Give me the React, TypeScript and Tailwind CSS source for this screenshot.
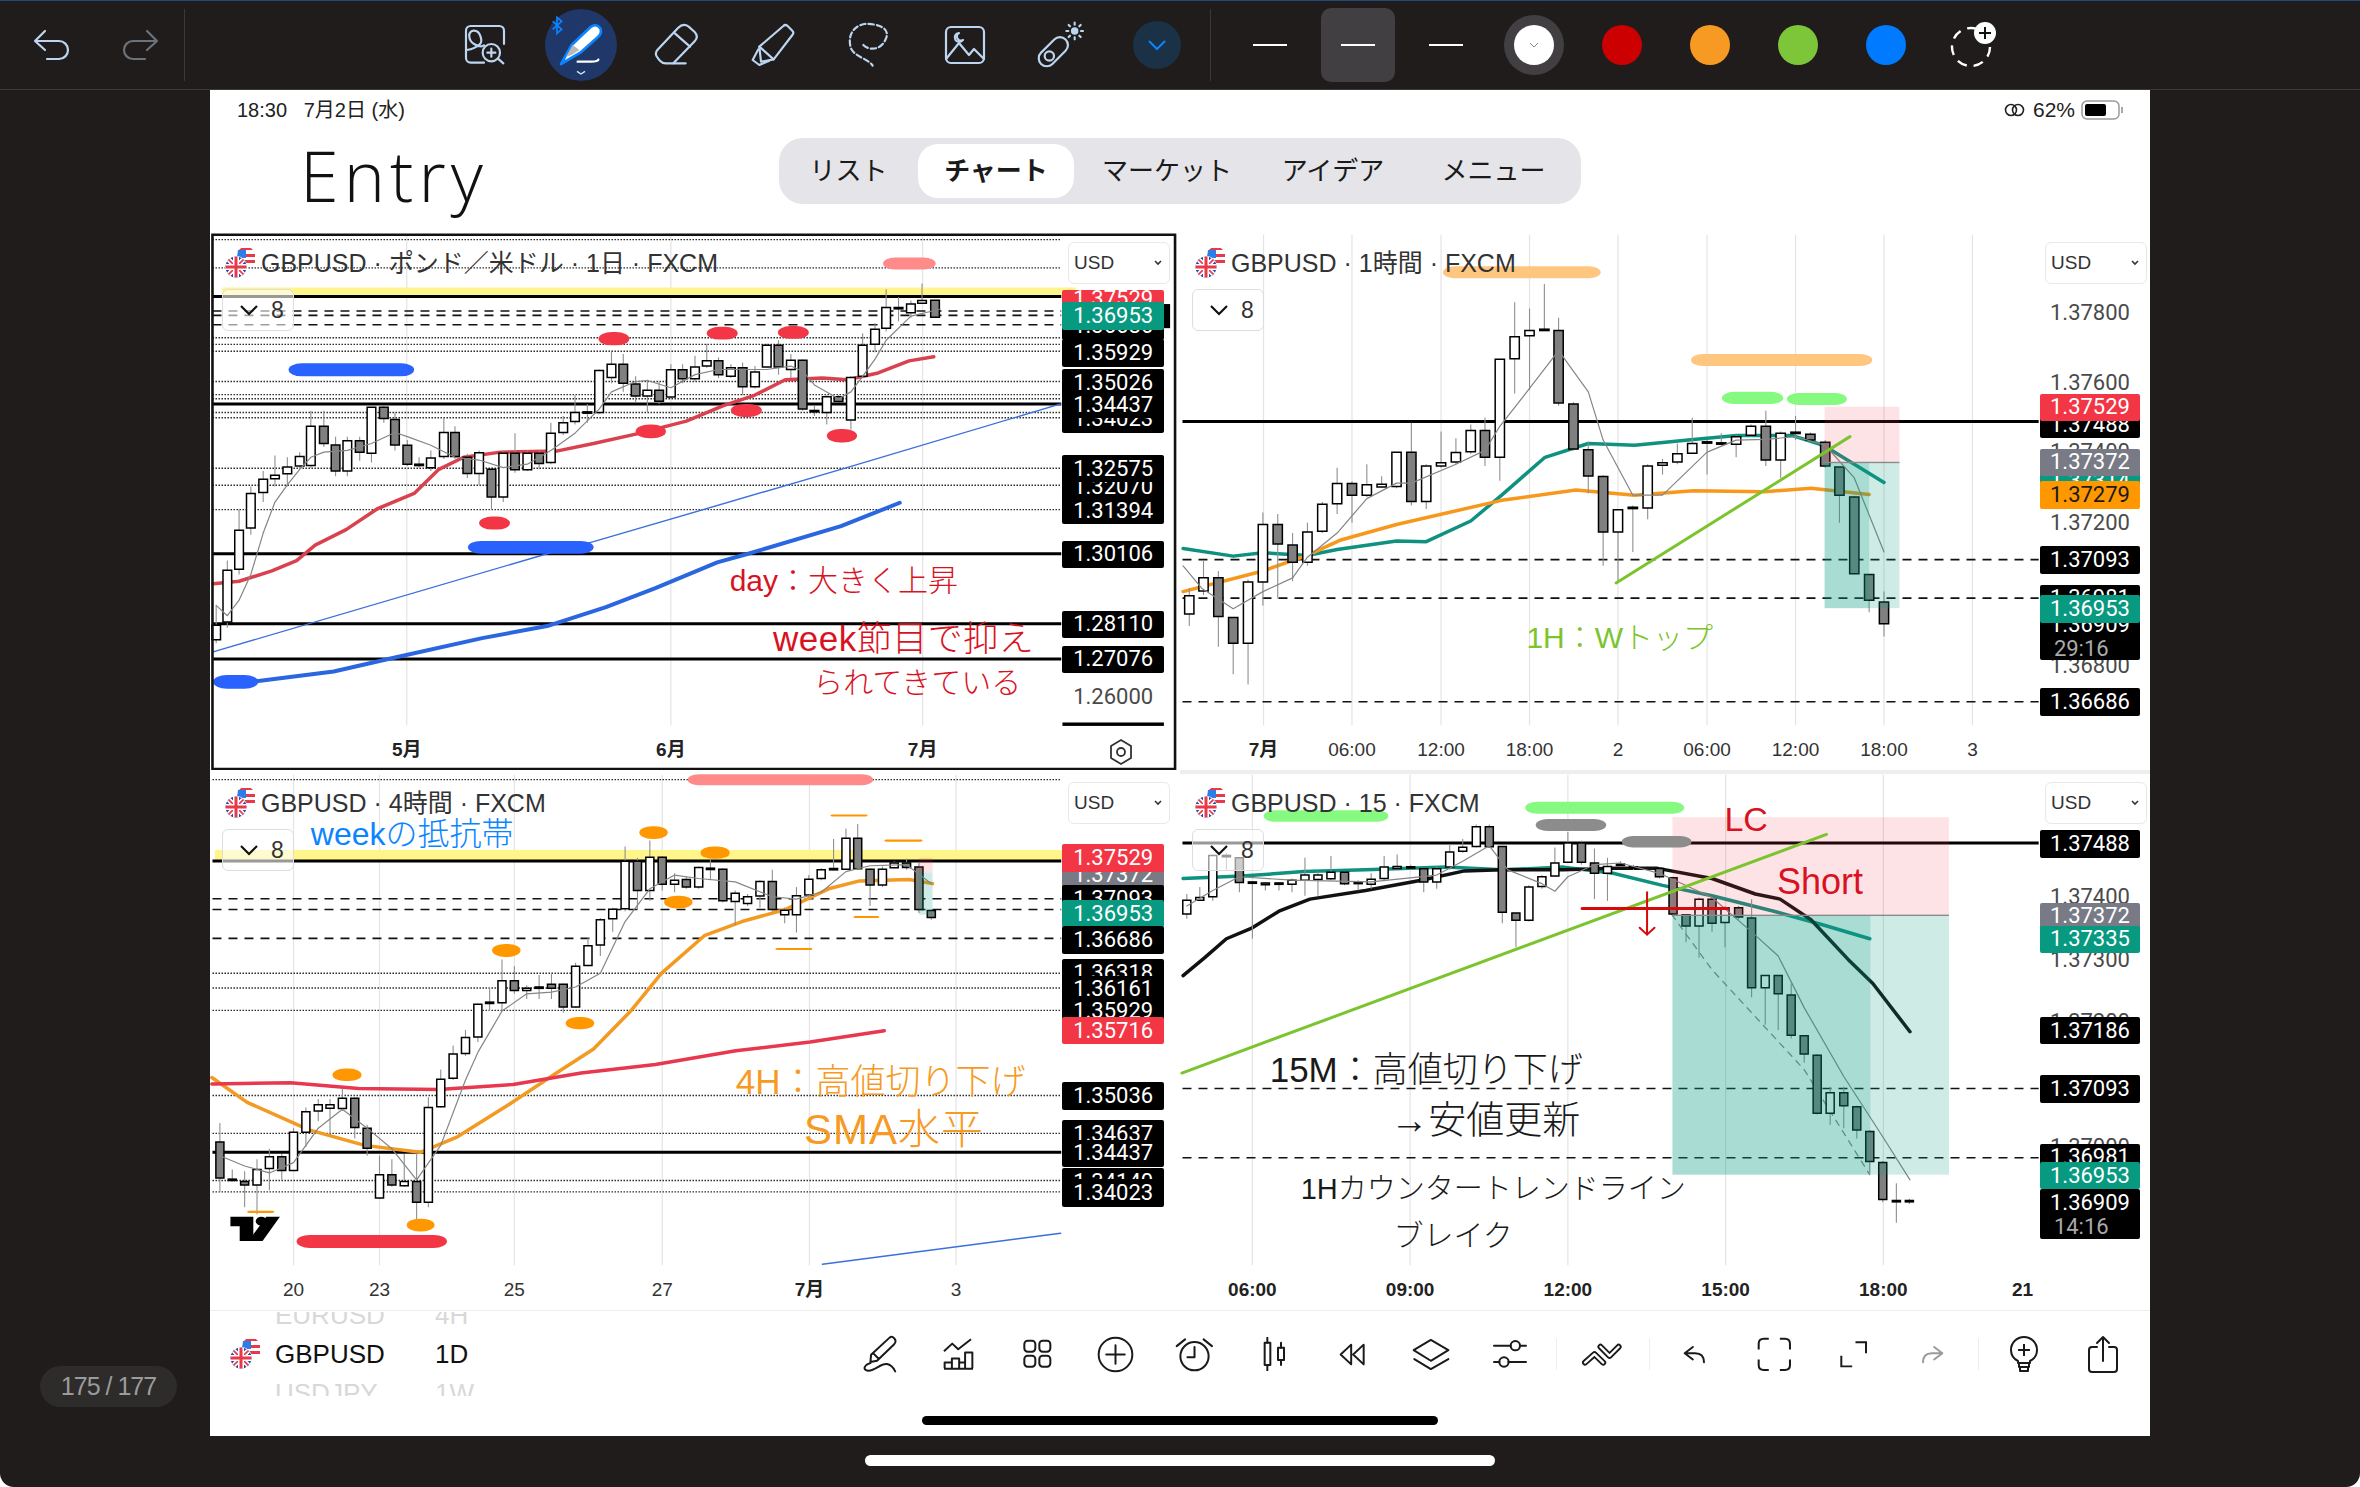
import React from "react";

type C = number[];
type L = { c: number; t: string; bg?: string; fg?: string; t2?: string; h?: number };
type N = { x: number; c: number; t: string; s: number; col: string; ls?: number };
type Line = { p: number[][]; col: string; w: number; dash?: string };
type Chart = {
  title: string; hw: number; candles: C[]; verts: number[]; xl: [number, string, boolean?][];
  solid: number[]; dashed: number[]; dotted: number[]; back: (string | number)[][]; front: (string | number)[][];
  lines: Line[]; over: Line[]; pills: (string | number)[][]; labels: L[]; lx: [number, number]; notes: N[]; lineEnd: number;
};

const X = (z: number) => (z * 970) / 1568;
const Y = (z: number) => (z * 540) / 1568;
const NS = "non-scaling-stroke" as const;
const RED = "#f23645", GRN = "#089981", GRY = "#787b86", ORG = "#ff9800";
const PO = "#ff9800", PR = "#f23645", PB = "#2962ff";
const PLAIN = { bg: "transparent", fg: "#4a4a4a" };

const ch1: Chart = {
  title: "GBPUSD · ポンド／米ドル · 1日 · FXCM", hw: 7, lx: [1378, 1542], lineEnd: 1376,
  candles: [[10,1148,1190,1090,1200,0],[28,988,1138,960,1155,0],[47,872,985,810,1000,0],[66,765,865,745,885,0],[86,724,762,700,790,0],[105,712,722,655,745,0],[125,688,708,660,745,0],[145,658,685,645,690,0],[163,570,684,525,690,0],[184,570,620,525,630,1],[203,624,700,600,715,1],[222,612,700,600,715,0],[242,612,645,600,670,1],[261,515,648,515,675,0],[281,515,547,510,560,1],[299,550,624,530,640,1],[319,625,680,610,685,1],[338,680,682,660,690,1],[357,662,690,640,700,0],[378,588,658,545,665,0],[396,588,658,570,665,1],[416,660,707,650,720,1],[435,647,707,640,740,0],[455,695,775,690,810,1],[474,648,775,640,790,0],[493,648,696,590,705,1],[513,648,696,640,700,0],[532,648,678,640,695,1],[551,590,675,560,680,0],[571,560,588,540,595,0],[590,530,556,480,565,0],[610,528,530,505,560,1],[629,408,530,405,535,0],[649,390,428,350,445,0],[668,390,445,360,470,1],[688,447,482,425,500,1],[707,465,482,435,530,0],[726,465,497,440,505,1],[745,406,485,390,490,0],[764,406,432,390,445,1],[784,398,432,365,440,0],[803,380,395,330,400,0],[822,380,420,370,430,1],[842,400,425,390,430,0],[861,400,455,385,480,1],[881,412,455,395,460,0],[900,335,398,330,400,0],[919,335,398,320,420,1],[939,378,405,360,430,0],[958,378,520,375,525,1],[977,524,528,510,540,1],[997,484,530,480,565,0],[1016,484,498,480,500,1],[1036,428,552,425,580,0],[1055,335,425,300,430,0],[1075,288,332,270,355,0],[1093,225,285,172,295,0],[1113,225,228,195,265,1],[1133,215,240,205,255,0],[1151,205,213,155,215,0],[1172,204,253,204,255,1]],
  verts: [318, 745, 1152], xl: [[318,"5月",true],[745,"6月",true],[1152,"7月",true]],
  solid: [193, 505, 940, 1143, 1246], dashed: [235, 248, 275], dotted: [28,110,313,332,352,440,478,490,530,545,692,741,812],
  back: [[20,167,1400,198,"#fff58a"]],
  front: [[1542,215,1552,285,"#000",1],[1378,1430,1542,1440,"#000",1]],
  lines: [
    { p: [[5,1027],[47,1020],[100,990],[140,960],[170,915],[220,870],[270,810],[330,765],[370,695],[410,660],[470,645],[560,642],[620,620],[690,592],[770,555],[830,510],[880,480],[930,435],[990,430],[1030,435],[1080,415],[1130,380],[1170,368]], col: "#d9414f", w: 3.5 },
    { p: [[5,1225],[545,940],[620,905],[1020,695],[1375,505]], col: "#3a6fdc", w: 1.4 },
    { p: [[75,1310],[200,1282],[290,1245],[440,1185],[545,1150],[640,1095],[720,1040],[820,965],[870,940],[1020,860],[1115,792]], col: "#2a66e0", w: 4 },
    { p: [[10,1090],[28,1120],[47,1075],[66,1000],[86,880],[105,790],[125,740],[145,695],[163,660],[184,645],[222,640],[261,620],[299,588],[319,600],[357,625],[396,660],[435,668],[474,690],[513,680],[551,640],[590,590],[629,520],[649,470],[688,440],[707,437],[745,458],[784,420],[822,405],[861,405],[900,405],[939,395],[958,410],[977,450],[1016,490],[1036,470],[1055,425],[1075,375],[1093,320],[1133,250],[1180,230]], col: "#858585", w: 1.2 },
  ],
  over: [],
  pills: [[127,387,330,425,PB],[417,903,620,940,PB],[5,1292,78,1332,PB],[628,296,678,335,PR],[803,281,853,318,PR],[918,279,968,316,PR],[842,505,892,543,PR],[688,565,737,605,PR],[997,578,1046,617,PR],[435,832,485,870,PR],[1088,80,1173,115,"#ff8a8a"]],
  labels: [{c:200,h:50,t:"1.37529",bg:RED},{c:280,t:"1.36686"},{c:250,t:"1.36953",bg:GRN},{c:357,t:"1.35929"},{c:445,t:"1.35026"},{c:550,t:"1.34023"},{c:507,t:"1.34437"},{c:745,t:"1.32070"},{c:693,t:"1.32575"},{c:815,t:"1.31394"},{c:942,t:"1.30106"},{c:1145,t:"1.28110"},{c:1247,t:"1.27076"},{c:1357,t:"1.26000",...PLAIN}],
  notes: [
    {x:840,c:1020,t:"day：大きく上昇",s:30,col:"#d8121f"},
    {x:910,c:1185,t:"week節目で抑え",s:35,col:"#d8121f",ls:0.5},
    {x:975,c:1315,t:"られてきている",s:30,col:"#d8121f"},
  ],
};

const ch2: Chart = {
  title: "GBPUSD · 1時間 · FXCM", hw: 7.5, lx: [1390, 1552], lineEnd: 1388,
  candles: [[15,1062,1115,1040,1150,0],[38,1010,1048,960,1060,0],[62,1010,1122,990,1210,1],[86,1125,1200,1125,1290,1],[110,1022,1200,1015,1320,0],[134,855,1022,820,1090,0],[158,855,912,825,1070,1],[182,915,965,880,1020,1],[206,877,965,850,975,0],[230,796,875,790,880,0],[254,736,795,690,825,0],[278,736,770,730,850,1],[302,740,770,680,775,0],[326,738,746,715,748,0],[350,645,745,645,750,0],[374,645,788,560,800,1],[398,685,788,680,810,0],[422,676,685,585,690,0],[446,646,674,605,680,0],[470,582,644,565,650,0],[493,582,660,545,685,1],[517,375,660,375,728,0],[541,310,374,210,475,0],[565,292,307,228,465,0],[589,288,291,157,292,1],[612,292,502,255,510,1],[636,505,636,500,640,1],[660,638,714,615,765,1],[684,716,877,712,975,1],[708,812,877,810,1020,0],[732,805,808,800,935,1],[756,685,807,680,840,0],[780,676,683,665,710,0],[804,650,674,620,680,0],[828,620,648,545,650,0],[852,615,618,610,710,1],[875,618,622,590,625,1],[899,600,622,595,660,0],[923,570,596,565,600,0],[947,570,668,525,685,1],[971,590,668,585,720,0],[995,587,590,540,610,1],[1019,593,610,588,615,1],[1043,616,685,610,690,1],[1066,688,770,688,850,1],[1090,775,998,772,1000,1],[1114,1000,1075,1000,1110,1],[1138,1080,1143,1050,1180,1]],
  verts: [135,278,422,565,708,852,995,1138,1281],
  xl: [[135,"7月",true],[278,"06:00"],[422,"12:00"],[565,"18:00"],[708,"2"],[852,"06:00"],[995,"12:00"],[1138,"18:00"],[1281,"3"]],
  solid: [556], dashed: [957, 1069, 1370], dotted: [], back: [],
  front: [[1042,513,1163,675,"#f23645",0.14],[1042,675,1163,1098,"#089981",0.2],[1042,675,1114,1098,"#089981",0.18],[1042,673,1163,677,"#8a8a8a",1]],
  lines: [
    { p: [[5,925],[86,947],[134,937],[206,945],[254,928],[350,903],[398,905],[470,845],[520,770],[590,660],[660,620],[735,625],[830,608],[900,597],[990,597],[1040,625],[1090,680],[1138,733]], col: "#0f9180", w: 3.5 },
    { p: [[5,1050],[134,990],[206,945],[260,900],[350,855],[520,785],[640,755],[735,770],[830,757],[945,760],[1020,750],[1114,768]], col: "#f7981d", w: 3.5 },
    { p: [[5,975],[35,1040],[86,1100],[134,1050],[182,1010],[206,950],[254,880],[302,780],[350,735],[374,735],[446,680],[493,640],[517,570],[565,460],[612,350],[660,470],[684,610],[732,770],[780,770],[852,645],[899,610],[947,608],[995,600],[1043,625],[1090,720],[1138,935]], col: "#858585", w: 1.2 },
  ],
  over: [{ p: [[705,1025],[1083,600]], col: "#7cc42e", w: 3 }],
  pills: [[425,105,680,140,"#ffc680"],[826,360,1119,395,"#ffc680"],[876,470,975,505,"#85f980"],[981,473,1078,508,"#85f980"]],
  labels: [{c:242,t:"1.37800",...PLAIN},{c:445,t:"1.37600",...PLAIN},{c:850,t:"1.37200",...PLAIN},{c:1265,t:"1.36800",...PLAIN},{c:645,t:"1.37400",...PLAIN},{c:565,t:"1.37488"},{c:515,t:"1.37529",bg:RED},{c:730,t:"1.37314",bg:GRN},{c:675,t:"1.37372",bg:GRY},{c:770,t:"1.37279",bg:ORG,fg:"#1a1a1a"},{c:958,t:"1.37093"},{c:1148,t:"1.36909",t2:"29:16",h:142},{c:1070,t:"1.36981"},{c:1100,t:"1.36953",bg:GRN},{c:1370,t:"1.36686"}],
  notes: [{x:560,c:1185,t:"1H：Wトップ",s:30,col:"#7cc42e"}],
};

const ch3: Chart = {
  title: "GBPUSD · 4時間 · FXCM", hw: 6.5, lx: [1378, 1542], lineEnd: 1376,
  candles: [[16,1080,1185,1025,1225,1],[36,1188,1192,1160,1195,1],[56,1195,1205,1165,1270,1],[76,1160,1205,1130,1290,0],[96,1123,1157,1100,1220,0],[116,1123,1163,1115,1190,1],[135,1052,1163,1040,1165,0],[155,992,1052,980,1095,0],[175,972,990,955,1020,0],[194,972,982,955,1060,0],[214,953,983,925,990,0],[234,953,1038,950,1070,1],[254,1040,1098,1030,1120,1],[274,1175,1243,1120,1245,0],[294,1175,1205,1130,1210,1],[314,1195,1207,1115,1210,0],[334,1195,1255,1110,1305,1],[353,980,1255,950,1270,0],[373,898,978,870,980,0],[393,825,895,800,900,0],[413,777,823,755,830,0],[433,680,775,678,790,0],[452,674,678,630,700,1],[472,612,676,550,700,0],[492,612,640,570,650,1],[512,634,640,625,665,0],[532,630,634,595,665,0],[552,622,634,590,665,1],[571,622,688,620,705,1],[591,570,688,560,690,0],[611,510,568,485,570,0],[631,435,508,430,540,0],[651,404,432,400,470,0],[671,265,403,222,410,0],[691,265,350,255,405,1],[711,253,350,205,380,0],[731,253,332,250,350,1],[751,320,332,300,355,0],[770,318,340,310,345,1],[790,283,340,280,345,0],[809,285,289,258,320,1],[829,288,380,285,385,1],[849,358,382,350,450,0],[869,368,388,360,395,0],[889,324,366,320,400,0],[909,324,405,290,410,1],[929,407,420,400,445,0],[948,365,420,340,472,0],[968,317,363,305,370,0],[988,290,315,285,320,0],[1008,286,290,200,290,1],[1028,198,288,170,290,0],[1047,198,287,157,290,1],[1067,288,334,285,395,1],[1087,288,334,280,340,0],[1106,270,284,265,285,0],[1126,270,283,258,290,1],[1146,282,405,270,415,1],[1166,408,428,405,435,1]],
  verts: [135,274,492,731,969,1206],
  xl: [[135,"20"],[274,"23"],[492,"25"],[731,"27"],[969,"7月",true],[1206,"3"]],
  solid: [264, 1110], dashed: [374, 405, 489], dotted: [28,590,633,698,945,1055,1192,1225],
  back: [[8,232,1378,262,"#fff58a"]],
  front: [[1146,255,1168,298,"#f23645",0.14],[1146,298,1168,420,"#089981",0.2]],
  lines: [
    { p: [[3,893],[60,965],[160,1045],[250,1090],[340,1110],[400,1065],[480,975],[560,880],[620,810],[680,700],[730,590],[800,480],[860,440],[930,405],[1000,345],[1050,322],[1130,318],[1168,330]], col: "#f29a21", w: 3.5 },
    { p: [[3,912],[130,908],[240,925],[370,928],[490,913],[600,880],[720,855],[850,815],[970,790],[1090,757]], col: "#e8384f", w: 3.5 },
    { p: [[990,1435],[1375,1345]], col: "#3a6fdc", w: 1.4 },
    { p: [[16,1120],[56,1150],[96,1170],[135,1140],[175,1040],[214,985],[254,1040],[294,1100],[334,1190],[373,1090],[413,900],[433,820],[472,700],[512,650],[552,645],[591,630],[631,590],[671,440],[711,345],[751,305],[790,315],[849,325],[909,368],[948,375],[988,355],[1028,295],[1067,278],[1126,275],[1166,330]], col: "#858585", w: 1.2 },
  ],
  over: [],
  pills: [[772,12,1072,44,"#ff8a8a"],[694,163,740,200,PO],[793,222,840,258,PO],[734,365,780,402,PO],[456,505,502,543,PO],[575,717,621,753,PO],[198,867,245,903,PO],[318,1303,363,1340,PO],[140,1350,383,1388,PR],[1003,129,1063,135,PO],[1090,202,1152,208,PO],[1040,424,1082,430,PO],[914,517,974,523,PO],[60,1280,104,1286,PO]],
  labels: [{c:305,t:"1.37372",bg:GRY},{c:255,t:"1.37529",bg:RED},{c:375,t:"1.37093"},{c:417,t:"1.36953",bg:GRN},{c:493,t:"1.36686"},{c:590,t:"1.36318"},{c:637,t:"1.36161"},{c:700,t:"1.35929"},{c:757,t:"1.35716",bg:RED},{c:947,t:"1.35036"},{c:1057,t:"1.34637"},{c:1195,t:"1.34140"},{c:1113,t:"1.34437"},{c:1228,t:"1.34023"}],
  notes: [
    {x:163,c:187,t:"weekの抵抗帯",s:32,col:"#0a84ff"},
    {x:850,c:905,t:"4H：高値切り下げ",s:35,col:"#f79a23"},
    {x:960,c:1045,t:"SMA水平",s:42,col:"#f79a23",ls:1},
  ],
};

const ch4: Chart = {
  title: "GBPUSD · 15 · FXCM", hw: 6.5, lx: [1390, 1552], lineEnd: 1388,
  candles: [[11,378,418,360,432,0],[32,370,378,340,380,0],[53,248,368,245,380,0],[75,248,252,240,290,1],[96,255,327,255,355,1],[117,325,329,325,490,1],[138,328,333,325,350,1],[160,328,332,325,350,1],[181,320,332,315,355,0],[202,305,320,255,365,0],[223,305,318,295,365,0],[244,297,316,250,320,0],[266,297,330,295,335,1],[288,326,330,320,350,1],[309,317,332,300,345,0],[330,282,315,250,320,0],[351,280,286,245,290,0],[373,281,285,275,290,1],[394,287,325,285,355,1],[415,287,325,280,345,0],[436,238,282,215,290,0],[457,224,236,200,240,0],[479,165,222,158,225,0],[500,165,223,158,225,1],[521,222,413,220,445,1],[543,415,436,415,515,1],[564,340,436,335,440,0],[585,310,338,305,345,0],[606,270,308,225,310,0],[627,212,268,180,270,0],[649,212,268,205,275,1],[670,270,300,228,375,1],[691,280,300,255,380,0],[712,273,277,265,280,1],[733,281,285,275,290,1],[775,286,310,283,315,1],[797,313,418,310,425,1],[818,420,453,418,500,1],[839,375,453,370,545,0],[860,375,445,370,470,1],[881,400,443,395,515,0],[903,400,427,395,435,1],[924,430,632,375,660,1],[946,597,632,595,740,0],[967,597,650,595,755,1],[988,653,770,620,780,1],[1009,772,825,770,850,1],[1030,828,997,825,1000,1],[1051,937,997,920,1030,0],[1073,937,975,920,1040,1],[1094,978,1045,975,1070,1],[1115,1050,1137,1045,1170,1],[1136,1140,1247,1135,1255,1],[1158,1250,1254,1200,1315,1],[1179,1250,1254,1245,1260,1]],
  verts: [117,372,627,882,1137],
  xl: [[117,"06:00",true],[372,"09:00",true],[627,"12:00",true],[882,"15:00",true],[1137,"18:00",true],[1362,"21",true]],
  solid: [212], dashed: [925, 1126], dotted: [], back: [],
  front: [[796,137,1243,422,"#f23645",0.14],[796,422,1243,1175,"#089981",0.2],[796,422,1116,1175,"#089981",0.18],[796,420,1243,424,"#8a8a8a",1]],
  lines: [
    { p: [[5,315],[100,308],[200,295],[300,290],[430,282],[520,290],[620,282],[700,300],[780,335],[860,365],[960,410],[1040,450],[1115,490]], col: "#0f9180", w: 3.5 },
    { p: [[5,597],[40,545],[75,490],[115,460],[160,410],[210,375],[300,350],[390,320],[460,293],[520,290],[620,290],[700,285],[770,285],[860,315],[930,360],[970,375],[1020,435],[1080,550],[1120,620],[1180,760]], col: "#111111", w: 3.5 },
    { p: [[795,420],[860,580],[1009,870],[1115,1175]], col: "#8a8a8a", w: 1.3, dash: "6 6" },
    { p: [[11,395],[53,350],[96,310],[181,320],[309,325],[415,305],[457,265],[500,220],[530,290],[585,330],[606,352],[627,310],[670,275],[712,270],[775,300],[860,370],[924,470],[967,540],[1009,690],[1073,890],[1136,1065],[1180,1190]], col: "#858585", w: 1.2 },
  ],
  over: [
    { p: [[3,880],[1045,187]], col: "#7cc42e", w: 3 },
    { p: [[650,402],[885,402]], col: "#d60a0a", w: 3 },
    { p: [[755,355],[755,478]], col: "#d60a0a", w: 2 },
    { p: [[743,458],[755,478],[767,458]], col: "#d60a0a", w: 2 },
  ],
  pills: [[135,117,337,150,"#85f980"],[558,92,815,127,"#85f980"],[575,142,689,177,"#8c8c8c"],[714,192,827,225,"#8c8c8c"]],
  labels: [{c:370,t:"1.37400",...PLAIN},{c:553,t:"1.37300",...PLAIN},{c:1095,t:"1.37000",...PLAIN},{c:732,t:"1.37200",...PLAIN},{c:215,t:"1.37488"},{c:425,t:"1.37372",bg:GRY},{c:492,t:"1.37335",bg:GRN},{c:757,t:"1.37186"},{c:927,t:"1.37093"},{c:1125,t:"1.36981"},{c:1258,t:"1.36909",t2:"14:16",h:145},{c:1178,t:"1.36953",bg:GRN}],
  notes: [
    {x:880,c:143,t:"LC",s:34,col:"#d8121f"},
    {x:965,c:325,t:"Short",s:36,col:"#d8121f"},
    {x:145,c:870,t:"15M：高値切り下げ",s:35,col:"#1a1a1a"},
    {x:340,c:1015,t:"→安値更新",s:38,col:"#1a1a1a"},
    {x:195,c:1218,t:"1Hカウンタートレンドライン",s:29,col:"#1a1a1a"},
    {x:345,c:1352,t:"ブレイク",s:30,col:"#1a1a1a"},
  ],
};

function Flag({ size = 30 }: { size?: number }) {
  return (
    <svg width={size} height={size} viewBox="0 0 30 30" className="shrink-0">
      <circle cx="21" cy="9" r="9" fill="#fff" />
      <path d="M14 2a9 9 0 0 1 14 0zM13 6h17v3H12zM12 12h18v3H14z" fill="#e8394b" />
      <path d="M13 2h8v8h-9z" fill="#2b7de9" />
      <circle cx="11" cy="19" r="11" fill="#fff" />
      <clipPath id="ukc"><circle cx="11" cy="19" r="10.5" /></clipPath>
      <g clipPath="url(#ukc)">
        <rect x="0" y="8" width="22" height="22" fill="#29479b" />
        <path d="M0 8l22 22M22 8L0 30" stroke="#fff" strokeWidth="5" />
        <path d="M0 8l22 22M22 8L0 30" stroke="#e8394b" strokeWidth="1.6" />
        <path d="M11 8v22M0 19h22" stroke="#fff" strokeWidth="6" />
        <path d="M11 8v22M0 19h22" stroke="#e8394b" strokeWidth="3" />
      </g>
    </svg>
  );
}

function ChartPanel({ d, active, sep, logo, gear }: { d: Chart; active?: boolean; sep?: boolean; logo?: boolean; gear?: boolean }) {
  const poly = (l: Line, i: number) => (
    <polyline key={i} points={l.p.map((q) => q.join(",")).join(" ")} fill="none" stroke={l.col} strokeWidth={l.w} strokeDasharray={l.dash} strokeLinejoin="round" strokeLinecap="round" vectorEffect={NS} />
  );
  return (
    <div className="relative h-[540px] w-[970px] overflow-hidden bg-white">
      <svg className="absolute inset-0 h-full w-full" viewBox="0 0 1568 1568" preserveAspectRatio="none">
        {d.verts.map((v) => <line key={v} x1={v} x2={v} y1={14} y2={1438} stroke="#e4e4e4" strokeWidth={1.2} vectorEffect={NS} />)}
        {d.back.map((r, i) => <rect key={i} x={+r[0]} y={+r[1]} width={+r[2] - +r[0]} height={+r[3] - +r[1]} fill={String(r[4])} />)}
        {d.dotted.map((y) => <line key={y} x1={4} x2={d.lineEnd} y1={y} y2={y} stroke="#2b2b2b" strokeWidth={1.4} strokeDasharray="1.5 1.5" vectorEffect={NS} />)}
        {d.dashed.map((y) => <line key={y} x1={4} x2={d.lineEnd} y1={y} y2={y} stroke="#111" strokeWidth={1.6} strokeDasharray="9 7" vectorEffect={NS} />)}
        {d.solid.map((y) => <line key={y} x1={4} x2={d.lineEnd} y1={y} y2={y} stroke="#000" strokeWidth={3} vectorEffect={NS} />)}
        {d.lines.slice(0, -1).map(poly)}
        {d.candles.map((c, i) => (
          <g key={i}>
            <line x1={c[0]} x2={c[0]} y1={c[3]} y2={c[4]} stroke="#8f8f8f" strokeWidth={1.1} vectorEffect={NS} />
            <rect x={c[0] - d.hw} y={c[1]} width={d.hw * 2} height={Math.max(c[2] - c[1], 4)} fill={c[5] ? "#808080" : "#fff"} stroke="#000" strokeWidth={1.5} vectorEffect={NS} />
          </g>
        ))}
        {d.lines.slice(-1).map(poly)}
        {d.front.map((r, i) => <rect key={i} x={+r[0]} y={+r[1]} width={+r[2] - +r[0]} height={+r[3] - +r[1]} fill={String(r[4])} fillOpacity={r[5] as number} />)}
        {d.over.map(poly)}
        {d.pills.map((p, i) => {
          const h = +p[3] - +p[1];
          return <rect key={i} x={+p[0]} y={+p[1]} width={+p[2] - +p[0]} height={h} ry={h / 2} rx={(h * 540) / 970} fill={String(p[4])} />;
        })}
        {logo && (
          <g fill="#000">
            <path d="M33 1297H70V1368H48V1325H33Z" />
            <ellipse cx="83" cy="1310" rx="9" ry="13" />
            <path d="M91 1297H113L85 1368H62Z" />
          </g>
        )}
        {active && <rect x={4} y={14} width={1556} height={1551} fill="none" stroke="#111" strokeWidth={2.6} vectorEffect={NS} />}
        {sep && <rect x={0} y={0} width={1568} height={12} fill="#eeeeee" />}
      </svg>

      {d.labels.map((l, i) => {
        const h = Y(l.h ?? 80);
        const two = !!l.t2;
        return (
          <div
            key={i}
            className="absolute overflow-hidden rounded-[2px] text-[22px] font-['Roboto',sans-serif]"
            style={{ left: X(d.lx[0]), width: X(d.lx[1] - d.lx[0]), top: two ? Y(l.c) - 14 : Y(l.c) - h / 2, height: h, background: l.bg ?? "#000", color: l.fg ?? "#fff" }}
          >
            <div className={`flex items-center justify-center leading-none ${two ? "h-[28px]" : "h-full"}`}>{l.t}</div>
            {two && <div className="pl-[14px] leading-[20px] text-[#aaaaaa]">{l.t2}</div>}
          </div>
        );
      })}

      {d.notes.map((n, i) => (
        <div key={i} className="absolute whitespace-nowrap font-light leading-none" style={{ left: X(n.x), top: Y(n.c) - n.s / 2, fontSize: n.s, color: n.col, letterSpacing: n.ls }}>{n.t}</div>
      ))}

      {d.xl.map(([x, t, b], i) => (
        <div key={i} className={`absolute top-[508px] w-[80px] text-center text-[19px] leading-[24px] ${b ? "font-semibold text-[#222]" : "text-[#333]"}`} style={{ left: X(x) - 40 }}>{t}</div>
      ))}

      <div className="absolute left-[15px] top-[18px] flex items-center gap-[6px] text-[25px] leading-[30px] text-[#333]">
        <Flag />
        <span className="whitespace-nowrap">{d.title}</span>
      </div>
      <div className={`absolute top-[12px] flex h-[42px] w-[102px] items-center justify-between rounded-[6px] border border-[#e8e8e8] bg-white/90 pl-[5px] pr-[6px] text-[19px] text-[#333] ${d.lx[0] === 1378 ? "left-[858px]" : "left-[865px]"}`}>
        USD
        <svg width="10" height="8" viewBox="0 0 10 8"><path d="M2 2l3 3 3-3" fill="none" stroke="#333" strokeWidth="1.6" /></svg>
      </div>
      <div className="absolute left-[12px] top-[59px] flex h-[42px] w-[72px] items-center gap-[12px] rounded-[6px] border border-[#dddddd] bg-white/60 pl-[16px] text-[23px] text-[#333]">
        <svg width="20" height="14" viewBox="0 0 20 14"><path d="M2 3l8 8 8-8" fill="none" stroke="#111" strokeWidth="2.2" /></svg>
        8
      </div>
      {gear && (
        <svg className="absolute left-[897px] top-[507px]" width="28" height="30" viewBox="0 0 28 30" fill="none" stroke="#333" strokeWidth="1.8">
          <path d="M14 3l10 6v12l-10 6-10-6V9z" />
          <circle cx="14" cy="15" r="4" />
        </svg>
      )}
    </div>
  );
}

const tb = { fill: "none", stroke: "currentColor", strokeWidth: 6.5, strokeLinecap: "round" as const, strokeLinejoin: "round" as const };

function TopBar() {
  return (
    <div className="flex h-[90px] items-center border-b border-t border-b-[#3b3938] border-t-[#1f4a80] bg-[#1f1c1b] pl-[8px] text-[#bcd6f1]">
      <div className="flex h-[72px] w-[88px] items-center justify-center">
        <svg width="42" height="34" viewBox="0 0 42 34" fill="none" stroke="currentColor" strokeWidth="2.2" strokeLinecap="round" strokeLinejoin="round"><path d="M14 3L4 13l10 9M4 13h24a9 9 0 0 1 0 18H16" /></svg>
      </div>
      <div className="flex h-[72px] w-[88px] items-center justify-center text-[#6b7278]">
        <svg width="42" height="34" viewBox="0 0 42 34" fill="none" stroke="currentColor" strokeWidth="2.2" strokeLinecap="round" strokeLinejoin="round"><path d="M28 3l10 10-10 9M38 13H14a9 9 0 0 0 0 18h12" /></svg>
      </div>
      <div className="h-[72px] w-px bg-[#3b3938]" />
      <div className="flex w-[252px]" />
      <div className="flex h-[72px] w-[96px] items-center justify-center">
        <svg width="42" height="42" viewBox="40 72 126 126" {...tb}>
          <path d="M100 188H60a14 14 0 0 1-14-14V92a14 14 0 0 1 14-14h86a14 14 0 0 1 14 14v40" />
          <path d="M48 150c14-2 30-8 40-18M88 132c8-8 2-40-18-40s-18 30 0 40 26 8 30 4" />
          <circle cx="122" cy="158" r="26" /><path d="M142 176l16 14M122 146v24M110 158h24" />
        </svg>
      </div>
      <div className="flex h-[72px] w-[96px] items-center justify-center">
        <svg width="72" height="72" viewBox="282 27 216 216">
          <circle cx="390" cy="135" r="108" fill="#1f3769" />
          <path d="M305 64l27 24-14 12V52l14 12-27 24" fill="none" stroke="#0a84ff" strokeWidth="5" />
          <path d="M330 192L362 135L418 82Q435 68 448 85Q455 98 440 112L388 158Z" fill="#fff" stroke="#0a84ff" strokeWidth="8" strokeLinejoin="round" />
          <path d="M345 170L365 135L385 150L362 165Z" fill="#b9b9b9" />
          <path d="M380 185h40q20 0 22-6" fill="none" stroke="#fff" strokeWidth="7" strokeLinecap="round" />
          <path d="M378 214l12 8 12-8" fill="none" stroke="#dfe6f2" strokeWidth="4" />
        </svg>
      </div>
      <div className="flex h-[72px] w-[96px] items-center justify-center">
        <svg width="46" height="46" viewBox="610 66 138 138" {...tb}>
          <path d="M620 150L682 84Q698 68 714 80L732 96Q745 110 732 124L668 190H645Q635 190 628 182L622 175Q610 162 620 150Z" />
          <path d="M670 98L718 140M668 190H705" />
        </svg>
      </div>
      <div className="flex h-[72px] w-[96px] items-center justify-center">
        <svg width="46" height="46" viewBox="897 66 138 138" {...tb}>
          <path d="M925 140L997 78Q1003 72 1010 78L1024 92Q1030 98 1024 105L968 178L930 185Z" />
          <path d="M925 140L968 178M922 148L905 180L925 195L955 182" />
        </svg>
      </div>
      <div className="flex h-[72px] w-[96px] items-center justify-center">
        <svg width="46" height="46" viewBox="1185 66 138 138" {...tb} strokeDasharray="16 9">
          <path d="M1237 135C1250 150 1290 155 1305 115C1320 80 1270 70 1240 72C1200 80 1190 115 1200 145C1210 170 1250 175 1265 197" />
        </svg>
      </div>
      <div className="flex h-[72px] w-[96px] items-center justify-center">
        <svg width="42" height="40" viewBox="0 0 42 40" fill="none" stroke="currentColor" strokeWidth="2.2" strokeLinecap="round" strokeLinejoin="round">
          <rect x="2" y="2" width="38" height="36" rx="5" />
          <path d="M2 34l13-16 10 12 5-6 10 10" />
          <path d="M15 8a4.5 4.5 0 1 0 4 7 4 4 0 0 1-4-7z" />
        </svg>
      </div>
      <div className="flex h-[72px] w-[96px] items-center justify-center">
        <svg width="54" height="50" viewBox="100 60 162 150" {...tb}>
          <rect x="-52" y="-24" width="104" height="48" rx="24" transform="translate(158 155) rotate(-45)" />
          <circle cx="146" cy="168" r="14" />
          <circle cx="222" cy="93" r="8" fill="currentColor" />
          <path d="M222 68v6M222 112v6M197 93h6M241 93h6M204 75l4 4M240 75l-4 4M204 111l4-4M240 111l-4-4" />
        </svg>
      </div>
      <div className="flex h-[72px] w-[96px] items-center justify-center">
        <div className="flex h-[48px] w-[48px] items-center justify-center rounded-full bg-[#1b3145]">
          <svg width="20" height="12" viewBox="0 0 20 12"><path d="M2 2l8 8 8-8" fill="none" stroke="#0a84ff" strokeWidth="2" /></svg>
        </div>
      </div>
      <div className="h-[72px] w-[5px]" />
      <div className="h-[72px] w-px bg-[#3b3938]" />
      <div className="w-[15px]" />
      <div className="flex h-[74px] w-[88px] items-center justify-center"><div className="h-[2.5px] w-[34px] bg-white" /></div>
      <div className="flex h-[74px] w-[88px] items-center justify-center"><div className="flex h-[74px] w-[74px] items-center justify-center rounded-[10px] bg-[#413f42]"><div className="h-[2.5px] w-[34px] bg-white" /></div></div>
      <div className="flex h-[74px] w-[88px] items-center justify-center"><div className="h-[2.5px] w-[34px] bg-white" /></div>
      <div className="flex h-[74px] w-[88px] items-center justify-center">
        <div className="flex h-[60px] w-[60px] items-center justify-center rounded-full bg-[#413f42]">
          <div className="flex h-[40px] w-[40px] items-center justify-center rounded-full bg-white">
            <svg width="12" height="8" viewBox="0 0 12 8"><path d="M2 2l4 4 4-4" fill="none" stroke="#888" strokeWidth="1" /></svg>
          </div>
        </div>
      </div>
      <div className="flex w-[88px] justify-center"><div className="h-[40px] w-[40px] rounded-full bg-[#cc0000]" /></div>
      <div className="flex w-[88px] justify-center"><div className="h-[40px] w-[40px] rounded-full bg-[#f79a23]" /></div>
      <div className="flex w-[88px] justify-center"><div className="h-[40px] w-[40px] rounded-full bg-[#7ec639]" /></div>
      <div className="flex w-[88px] justify-center"><div className="h-[40px] w-[40px] rounded-full bg-[#007aff]" /></div>
      <div className="flex w-[88px] justify-center">
        <svg width="50" height="50" viewBox="0 0 50 50">
          <circle cx="22" cy="27" r="19" fill="none" stroke="#fff" strokeWidth="2.4" strokeDasharray="10 7" />
          <circle cx="36" cy="13" r="11" fill="#fff" />
          <path d="M36 7v12M30 13h12" stroke="#111" strokeWidth="2" />
        </svg>
      </div>
    </div>
  );
}

function Header() {
  return (
    <div className="h-[140px] bg-white">
      <div className="flex h-[40px] items-center justify-between pl-[27px] pr-[25px] text-[20px] text-[#222]">
        <span className="whitespace-pre">18:30   7月2日 (水)</span>
        <span className="flex items-center gap-[6px]">
          <svg width="24" height="14" viewBox="0 0 24 14" fill="none" stroke="#222" strokeWidth="1.6"><circle cx="8" cy="7" r="5.5" /><circle cx="15" cy="7" r="5.5" /></svg>
          <span className="text-[21px]">62%</span>
          <svg width="44" height="20" viewBox="0 0 44 20"><rect x="1" y="1" width="37" height="18" rx="5" fill="none" stroke="#9a9a9a" strokeWidth="1.5" /><rect x="4" y="4" width="21" height="12" rx="2" fill="#000" /><path d="M41 7v6" stroke="#aaa" strokeWidth="2" /></svg>
        </span>
      </div>
      <div className="mt-[8px] grid grid-cols-[1fr_auto_1fr]">
        <div className="pl-[90px] pt-[4px] text-[70px] font-light leading-[66px] tracking-[5px] text-[#111] font-['Open_Sans',sans-serif]">Entry</div>
        <div className="flex h-[66px] w-[802px] items-center rounded-[24px] bg-[#e4e4e9] text-[26px] text-[#1a1a1a]">
          <span className="w-[139px] text-center">リスト</span>
          <span className="flex h-[54px] w-[156px] items-center justify-center rounded-[20px] bg-white font-bold">チャート</span>
          <span className="w-[186px] text-center">マーケット</span>
          <span className="w-[146px] text-center">アイデア</span>
          <span className="w-[175px] text-center">メニュー</span>
        </div>
        <div />
      </div>
    </div>
  );
}

const bi = { fill: "none", stroke: "#1a1a1a", strokeWidth: 6, strokeLinecap: "round" as const, strokeLinejoin: "round" as const };
const Sep = () => <div className="h-[32px] w-px bg-[#eeeeee]" />;
const bottomIcons: [number, React.ReactNode][] = [
  [78, <svg width="35" height="38" viewBox="5 40 105 115" {...bi}><path d="M32 100L88 48Q95 42 102 50Q110 58 102 68L50 118L30 122ZM38 95L55 112M30 125C12 130 5 145 22 148C45 150 60 125 80 128C92 130 100 140 105 150" /></svg>],
  [80, <svg width="32" height="33" viewBox="245 48 95 100" {...bi} strokeLinecap="butt"><path d="M250 88L275 65L293 82L332 52M252 140V122H274V140M274 140V110H296V140M296 140V122H314V140M314 140V92H336V140M250 141H338" /></svg>],
  [78, <svg width="30" height="30" viewBox="485 55 90 90" {...bi}><rect x="492" y="60" width="33" height="33" rx="10" /><rect x="537" y="60" width="33" height="33" rx="10" /><rect x="492" y="105" width="33" height="33" rx="10" /><rect x="537" y="105" width="33" height="33" rx="10" /></svg>],
  [78, <svg width="37" height="37" viewBox="710 43 112 112" {...bi}><circle cx="766" cy="99" r="51" /><path d="M738 99H794M766 71V127" /></svg>],
  [80, <svg width="39" height="35" viewBox="945 48 116 104" {...bi}><circle cx="1003" cy="105" r="42" /><path d="M1003 78V108H982M950 75L975 55M1055 75L1030 55" /></svg>],
  [80, <svg width="25" height="34" viewBox="1205 48 75 102" {...bi}><rect x="1213" y="65" width="17" height="67" /><rect x="1253" y="80" width="18" height="37" /><path d="M1221 50V65M1221 132V148M1262 65V80M1262 117V132" /></svg>],
  [76, <svg width="28" height="23" viewBox="1432 65 85 70" {...bi}><path d="M1472 70L1440 100L1472 130ZM1510 70L1478 100L1510 130Z" /></svg>],
  [82, <svg width="38" height="33" viewBox="35 52 115 98" {...bi}><path d="M92 57L145 88L92 120L40 88ZM42 115L92 145L145 115" /></svg>],
  [76, <svg width="36" height="30" viewBox="276 58 108 90" {...bi}><circle cx="346" cy="78" r="14" /><circle cx="312" cy="127" r="14" /><path d="M282 78H332M360 78H378M282 127H298M325 127H378" /></svg>],
  [16, <Sep />],
  [76, <svg width="42" height="27" viewBox="545 58 125 80" fill="none" strokeLinecap="round" strokeLinejoin="round"><path d="M557 122L585 97L611 122M603 75L630 102L657 75" stroke="#1a1a1a" strokeWidth="18" /><path d="M557 122L585 97L611 122M603 75L630 102L657 75" stroke="#fff" strokeWidth="7" /></svg>],
  [18, <Sep />],
  [72, <svg width="23" height="19" viewBox="848 72 70 58" {...bi}><path d="M878 78L853 97L878 116M853 97H885Q912 97 912 125" /></svg>],
  [88, <svg width="35" height="35" viewBox="1070 48 104 104" {...bi} strokeLinecap="butt"><path d="M1105 53H1090Q1075 53 1075 68V85M1138 53H1153Q1168 53 1168 68V85M1075 115V132Q1075 146 1090 146H1105M1168 115V132Q1168 146 1153 146H1138" /></svg>],
  [70, <svg width="29" height="29" viewBox="1315 56 88 86" {...bi} strokeLinecap="butt" strokeLinejoin="miter"><path d="M1365 62H1397V95M1322 103V135H1355" /></svg>],
  [88, <svg width="23" height="19" viewBox="848 72 70 58" {...bi} stroke="#9a9a9a" transform="scale(-1 1)"><path d="M878 78L853 97L878 116M853 97H885Q912 97 912 125" /></svg>],
  [4, <Sep />],
  [88, <svg width="30" height="38" viewBox="0 0 30 38" fill="none" stroke="#1a1a1a" strokeWidth="2" strokeLinejoin="round"><path d="M9 26c-4-2-7-6-7-11a13 13 0 0 1 26 0c0 5-3 9-7 11v2H9zM10 28h10v4H10zM11 32v4h8v-4M15 9v12M9 15h12" /></svg>],
  [70, <svg width="34" height="38" viewBox="0 0 34 38" fill="none" stroke="#1a1a1a" strokeWidth="2" strokeLinecap="round" strokeLinejoin="round"><path d="M17 26V2M11 8l6-6 6 6M11 12H6a3 3 0 0 0-3 3v19a3 3 0 0 0 3 3h22a3 3 0 0 0 3-3V15a3 3 0 0 0-3-3h-5" /></svg>],
];

function BottomBar() {
  return (
    <div className="h-[126px] border-t border-[#eeeeee] bg-white">
      <div className="flex h-[86px] items-center pl-[20px]">
        <div className="flex h-[84px] w-[260px] shrink-0 flex-col justify-center overflow-hidden">
          <div className="flex h-[38px] shrink-0 items-center pl-[45px] text-[26px] text-[#d8d8d8]"><span className="w-[160px]">EURUSD</span><span>4H</span></div>
          <div className="flex h-[40px] shrink-0 items-center text-[26px] text-[#111]"><Flag size={30} /><span className="ml-[15px] w-[160px]">GBPUSD</span><span>1D</span></div>
          <div className="flex h-[38px] shrink-0 items-center pl-[45px] text-[26px] text-[#d8d8d8]"><span className="w-[160px]">USDJPY</span><span>1W</span></div>
        </div>
        <div className="w-[350px] shrink-0" />
        <div className="flex items-center">
          {bottomIcons.map(([w, ic], i) => (
            <div key={i} className="flex shrink-0 justify-center" style={{ width: w }}>{ic}</div>
          ))}
        </div>
      </div>
      <div className="mt-[19px] flex justify-center"><div className="h-[9px] w-[516px] rounded-full bg-black" /></div>
    </div>
  );
}

export default function App() {
  return (
    <div className="flex h-[1487px] w-[2360px] flex-col overflow-hidden rounded-b-[14px] bg-[#1f1c1b] font-['Liberation_Sans','Noto_Sans_CJK_JP',sans-serif]">
      <TopBar />
      <div className="flex">
        <div className="flex h-[1346px] w-[210px] flex-col justify-end pb-[29px] pl-[40px]">
          <div className="flex h-[41px] w-[137px] items-center justify-center rounded-full bg-[#2e2c2b] text-[25px] tracking-[-1px] text-[#9b9b9b]">175 / 177</div>
        </div>
        <div className="h-[1346px] w-[1940px] bg-white">
          <Header />
          <div className="grid h-[1080px] grid-cols-2 grid-rows-2">
            <ChartPanel d={ch1} active gear />
            <ChartPanel d={ch2} />
            <ChartPanel d={ch3} logo />
            <ChartPanel d={ch4} sep />
          </div>
          <BottomBar />
        </div>
        <div className="w-[210px]" />
      </div>
      <div className="flex flex-1 items-center justify-center pb-[2px]"><div className="h-[11px] w-[630px] rounded-full bg-white" /></div>
    </div>
  );
}
